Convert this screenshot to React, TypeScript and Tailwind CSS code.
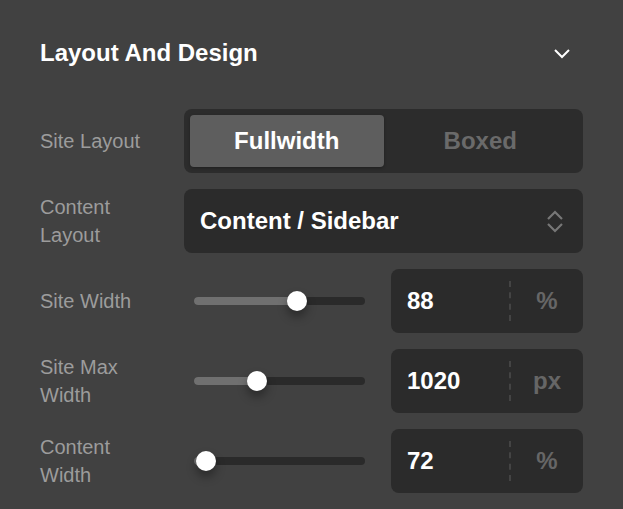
import * as React from 'react';

const sliders = [
  { label: 'Site Width', fill: 103, value: '88', unit: '%' },
  { label: 'Site Max Width', fill: 63, value: '1020', unit: 'px' },
  { label: 'Content Width', fill: 12, value: '72', unit: '%' },
];

function Label({ children }: { children: React.ReactNode }) {
  return (
    <div className="w-[120px] shrink-0 text-[20px] leading-[28px] text-[#9c9c9c]">
      {children}
    </div>
  );
}

function SliderRow({ label, fill, value, unit }: { label: string; fill: number; value: string; unit: string }) {
  return (
    <div className="flex h-16 items-center gap-6">
      <Label>{label}</Label>
      <div className="flex flex-1 items-center gap-4">
        <div className="flex-1 px-[10px]">
          <div className="relative h-2 rounded-full bg-[#2a2a2a]">
            <div className="h-2 rounded-full bg-[#707070]" style={{ width: fill }} />
            <div
              className="absolute top-1/2 h-5 w-5 -translate-x-1/2 -translate-y-1/2 rounded-full bg-white shadow-[0_6px_10px_rgba(0,0,0,0.35)]"
              style={{ left: fill }}
            />
          </div>
        </div>
        <div className="flex h-16 w-[192px] items-center rounded-lg bg-[#2b2b2b]">
          <div className="flex-1 pl-4 text-[24px] font-bold text-white">{value}</div>
          <div className="h-10 border-l-2 border-dashed border-[#444444]" />
          <div className="w-[72px] text-center text-[24px] font-bold text-[#666666]">{unit}</div>
        </div>
      </div>
    </div>
  );
}

export default function App() {
  return (
    <div
      className="min-h-screen bg-[#414141] px-10 pt-[37px]"
      style={{ fontFamily: '"Liberation Sans", Arial, sans-serif' }}
    >
      <div className="flex h-8 items-center justify-between pr-3">
        <h2 className="text-[24px] leading-8 font-bold text-white">Layout And Design</h2>
        <svg width="18" height="11" viewBox="0 0 18 11" fill="none" stroke="white" strokeWidth="2">
          <polyline points="2,2 9,9 16,2" />
        </svg>
      </div>

      <div className="mt-10 flex flex-col gap-4">
        <div className="flex h-16 items-center gap-6">
          <Label>Site Layout</Label>
          <div className="grid h-16 flex-1 grid-cols-2 rounded-lg bg-[#2c2c2c] p-[6px]">
            <button className="rounded bg-[#5e5e5e] text-[24px] font-bold text-white shadow-[0_1px_3px_rgba(0,0,0,0.3)]">
              Fullwidth
            </button>
            <button className="text-[24px] font-bold text-[#6a6a6a]">Boxed</button>
          </div>
        </div>

        <div className="flex h-16 items-center gap-6">
          <Label>Content Layout</Label>
          <div className="flex h-16 flex-1 items-center justify-between rounded-lg bg-[#2b2b2b] pl-4 pr-[19px]">
            <span className="text-[24px] font-bold text-white">Content / Sidebar</span>
            <svg width="18" height="24" viewBox="0 0 18 24" fill="none" stroke="#777777" strokeWidth="2.2">
              <polyline points="2,10 9,3 16,10" />
              <polyline points="2,15 9,22 16,15" />
            </svg>
          </div>
        </div>

        {sliders.map((s) => (
          <SliderRow key={s.label} {...s} />
        ))}
      </div>
    </div>
  );
}
